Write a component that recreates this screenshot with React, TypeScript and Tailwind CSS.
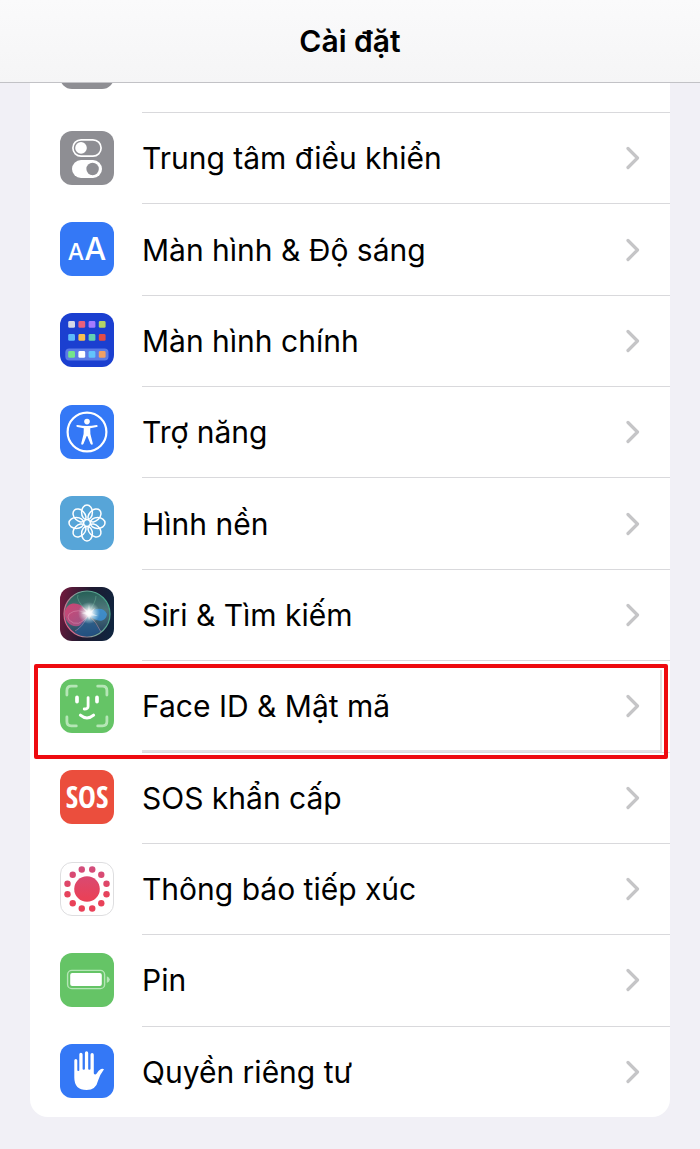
import type { ReactNode } from 'react';

const rim = [15, 45, 75, 105, 135, 165, 195, 225, 255, 285, 315, 345];
const petals = [0, 45, 90, 135, 180, 225, 270, 315];
const homeApps = [
  ['#d3d8e8', '#e8607c', '#a57bff', '#b2d465'],
  ['#5db9fa', '#f8c052', '#62d0b2', '#e24c46'],
  ['#74e58b', '#ffffff', '#63c4fb', '#f0a064'],
];
const homeRows = [8, 21, 38];

function Tile({ fill, children }: { fill: string; children?: ReactNode }) {
  return (
    <svg viewBox="0 0 54 54" className="size-[54px] shrink-0" aria-hidden="true">
      <rect width="54" height="54" rx="12" fill={fill} />
      {children}
    </svg>
  );
}

const ControlCenterIcon = () => (
  <Tile fill="#8e8e93">
    <rect x="12.9" y="8.8" width="28.2" height="16.4" rx="8.2" fill="none" stroke="#fff" strokeWidth="1.7" />
    <circle cx="21" cy="16.9" r="5.8" fill="#fff" />
    <rect x="12" y="29" width="30" height="18" rx="9" fill="#fff" />
    <circle cx="32.6" cy="38" r="6.2" fill="#8e8e93" />
  </Tile>
);

const DisplayIcon = () => (
  <Tile fill="#3478f6">
    <g fill="#fff" fontFamily="Inter, sans-serif" fontWeight="500">
      <text x="7.8" y="38" fontSize="23">A</text>
      <text x="24.2" y="38" fontSize="31">A</text>
    </g>
  </Tile>
);

const HomeScreenIcon = () => (
  <Tile fill="#1b3fd0">
    <rect x="5.3" y="35.5" width="43.2" height="12" rx="4" fill="#5b7be6" />
    {homeApps.map((row, r) =>
      row.map((color, c) => (
        <rect key={`${r}-${c}`} x={8.2 + c * 10.2} y={homeRows[r]} width="6.8" height="6.8" rx="1.4" fill={color} />
      )),
    )}
  </Tile>
);

const AccessibilityIcon = () => (
  <Tile fill="#3478f6">
    <circle cx="27" cy="27" r="19.4" fill="none" stroke="#fff" strokeWidth="2.2" />
    <circle cx="27" cy="16.6" r="2.8" fill="#fff" />
    <path
      d="M17.4 19.9 Q27 22.2 36.6 19.9 Q37.9 20 37.7 21.2 Q37.5 21.8 36.7 21.9 L30.2 23.2 L30.4 29 L32.8 38.4 Q32.8 39.9 31.3 39.6 L30.6 39 L27.3 31 H26.7 L23.4 39 L22.7 39.6 Q21.2 39.9 21.2 38.4 L23.6 29 L23.8 23.2 L17.3 21.9 Q16.4 21.8 16.3 21.1 Q16.2 20 17.4 19.9Z"
      fill="#fff"
    />
  </Tile>
);

const WallpaperIcon = () => (
  <Tile fill="#57a5d8">
    <g transform="translate(27 27)" fill="none" stroke="#fff" strokeWidth="1.5">
      {petals.map((a) => (
        <ellipse key={a} transform={`rotate(${a})`} cy="-10.6" rx="5.4" ry="7.4" />
      ))}
    </g>
  </Tile>
);

const SiriIcon = () => (
  <Tile fill="url(#siri-base)">
    <defs>
      <linearGradient id="siri-base" x1="0" y1="0.4" x2="1" y2="0.6">
        <stop offset="0" stopColor="#6b1a3c" />
        <stop offset="0.5" stopColor="#1d1a30" />
        <stop offset="1" stopColor="#10253f" />
      </linearGradient>
      <linearGradient id="siri-orb" x1="0.4" y1="0" x2="0.5" y2="1">
        <stop offset="0" stopColor="#245f55" />
        <stop offset="0.45" stopColor="#51777c" />
        <stop offset="1" stopColor="#1d3a5c" />
      </linearGradient>
      <linearGradient id="siri-rim" x1="0" y1="0.7" x2="1" y2="0.3">
        <stop offset="0" stopColor="#e55d87" />
        <stop offset="0.5" stopColor="#79a49c" />
        <stop offset="1" stopColor="#42a487" />
      </linearGradient>
      <linearGradient id="siri-left" x1="0" y1="0" x2="1" y2="1">
        <stop offset="0" stopColor="#df3f72" />
        <stop offset="1" stopColor="#a0588c" />
      </linearGradient>
      <radialGradient id="siri-glow">
        <stop offset="0" stopColor="#fff" />
        <stop offset="0.25" stopColor="#fff" stopOpacity="0.9" />
        <stop offset="1" stopColor="#c4eef0" stopOpacity="0" />
      </radialGradient>
    </defs>
    <circle cx="27" cy="27" r="23" fill="url(#siri-orb)" stroke="url(#siri-rim)" strokeWidth="1.2" />
    <path d="M30 28 C22 14 8 13 5 24 C3 38 18 44 24 35 Q26 31 30 28Z" fill="url(#siri-left)" opacity="0.9" />
    <path d="M28 27 C35 20 44 20 47 27 C46 36 36 36 28 27Z" fill="#3d91d6" opacity="0.85" />
    <path d="M29 28 C22 35 16 43 15 46 Q28 54 41 44 Q34 36 29 28Z" fill="#245d98" opacity="0.6" />
    <path d="M29 28 Q37 36 41 45 M28 28 Q23 40 15 44 M9 27 Q18 20 29 28 Q18 42 9 33 Q7 30 9 27Z" fill="none" stroke="#e3a0bd" strokeWidth="0.6" opacity="0.7" />
    <path d="M28 26 Q15 12 18 8 M28 26 Q36 15 36 9" stroke="#77bd9f" strokeWidth="0.6" fill="none" opacity="0.7" />
    <circle cx="29" cy="26" r="11" fill="url(#siri-glow)" />
    <path d="M29 17 L30 24.5 L35 21 L31.5 26 L38 29 L31 28.5 L29 33 L27.5 28 L21 26 L26.5 25 L22 20 L28 24Z" fill="#fff" opacity="0.5" />
  </Tile>
);

const FaceIdIcon = () => (
  <Tile fill="#65c466">
    <g fill="none" strokeLinecap="round" strokeLinejoin="round">
      <path
        d="M6.9 16 V11.5 Q6.9 7.2 11.2 7.2 H16.3 M37.7 7.2 H42.6 Q46.9 7.2 46.9 11.5 V16 M46.9 38 V42.6 Q46.9 46.9 42.6 46.9 H37.7 M16.3 46.9 H11.2 Q6.9 46.9 6.9 42.6 V38"
        stroke="#b5e6b6"
        strokeWidth="2.8"
      />
      <path d="M17 18.4 V22.6 M37 18.4 V22.6" stroke="#fff" strokeWidth="3.7" />
      <path d="M28.1 18.6 V27.2 Q28.1 30.2 24.2 30" stroke="#fff" strokeWidth="2.8" />
      <path d="M20.4 36.2 Q27 41.8 33.6 36.2" stroke="#fff" strokeWidth="3" />
    </g>
  </Tile>
);

const SosIcon = () => (
  <Tile fill="#eb4e3d">
    <text x="27" y="37.5" textAnchor="middle" fontSize="30" fontWeight="700" fill="#fff" fontFamily="'Liberation Sans Narrow', 'Open Sans Condensed', 'Liberation Sans', sans-serif">
      SOS
    </text>
  </Tile>
);

const ExposureIcon = () => (
  <Tile fill="#fff">
    <defs>
      <linearGradient id="exposure" gradientUnits="userSpaceOnUse" x1="27" y1="0" x2="27" y2="36">
        <stop offset="0" stopColor="#cf4f82" />
        <stop offset="1" stopColor="#e94158" />
      </linearGradient>
    </defs>
    <rect x="0.5" y="0.5" width="53" height="53" rx="11.5" fill="#fff" stroke="#dedee0" />
    <g fill="url(#exposure)">
      <circle cx="27" cy="27" r="12.8" />
      {rim.map((a) => (
        <circle key={a} cx={27 + 20.2 * Math.cos((a * Math.PI) / 180)} cy={27 + 20.2 * Math.sin((a * Math.PI) / 180)} r="3.2" />
      ))}
    </g>
  </Tile>
);

const BatteryIcon = () => (
  <Tile fill="#65c466">
    <rect x="7.6" y="17.4" width="37" height="18.2" rx="4.2" fill="none" stroke="#b5e6b6" strokeWidth="1.4" />
    <rect x="10.2" y="20" width="31.6" height="13" rx="2" fill="#fff" />
    <path d="M46.8 23.2 Q49.8 24.4 49.8 26.6 Q49.8 28.8 46.8 30Z" fill="#b5e6b6" />
  </Tile>
);

const PrivacyIcon = () => (
  <Tile fill="#3478f6">
    <path
      d="M14.3 16.4 Q14.3 14.9 15.8 14.9 Q17.3 14.9 17.3 16.4 V26.3 Q17.3 27 18.3 27 Q19.3 27 19.3 26.2 V10.5 Q19.3 8.8 20.9 8.8 Q22.6 8.8 22.6 10.5 V25 Q22.6 25.8 23.8 25.8 Q24.9 25.8 24.9 25 V9 Q24.9 7.3 26.6 7.3 Q28.2 7.3 28.2 9 V25 Q28.2 25.8 29.3 25.8 Q30.5 25.8 30.5 25 V10.8 Q30.5 9.1 32.1 9.1 Q33.8 9.1 33.8 10.8 V29.3 Q33.8 30.3 35 30.5 Q36 30.6 36.5 29.8 Q38.6 26.1 41 25.1 Q43 24.3 44 25.3 Q39.8 31 38.2 36.2 Q36 46 26.6 46 Q14.3 46 14.3 33.5Z"
      fill="#fff"
    />
  </Tile>
);

const settings: { label: string; icon: ReactNode; highlighted?: boolean }[] = [
  { label: 'Trung tâm điều khiển', icon: <ControlCenterIcon /> },
  { label: 'Màn hình & Độ sáng', icon: <DisplayIcon /> },
  { label: 'Màn hình chính', icon: <HomeScreenIcon /> },
  { label: 'Trợ năng', icon: <AccessibilityIcon /> },
  { label: 'Hình nền', icon: <WallpaperIcon /> },
  { label: 'Siri & Tìm kiếm', icon: <SiriIcon /> },
  { label: 'Face ID & Mật mã', icon: <FaceIdIcon />, highlighted: true },
  { label: 'SOS khẩn cấp', icon: <SosIcon /> },
  { label: 'Thông báo tiếp xúc', icon: <ExposureIcon /> },
  { label: 'Pin', icon: <BatteryIcon /> },
  { label: 'Quyền riêng tư', icon: <PrivacyIcon /> },
];

function Chevron() {
  return (
    <svg viewBox="0 0 14 24" className="mr-[30px] h-6 w-3.5 shrink-0" fill="none" aria-hidden="true">
      <path d="M2 2.5 L11.5 12 L2 21.5" stroke="#c5c5c7" strokeWidth="3.2" strokeLinecap="round" strokeLinejoin="round" />
    </svg>
  );
}

export default function App() {
  return (
    <div className="min-h-screen bg-[#f1f0f6] pb-8 font-['Inter','Noto_Sans',sans-serif] text-black">
      <header className="flex h-[83px] items-center justify-center border-b border-[#c2c2c6] bg-linear-to-b from-[#fafafb] to-[#f5f5f6]">
        <h1 className="text-[30px] leading-9 font-semibold">Cài đặt</h1>
      </header>
      <main className="mx-[30px] overflow-hidden rounded-b-[18px] bg-white">
        <div className="flex h-[29px] items-end overflow-hidden pb-[23px] pl-[30px]">
          <Tile fill="#8e8e93" />
        </div>
        <ul className="grid min-h-[1005px] auto-rows-fr">
          {settings.map(({ label, icon, highlighted }) => (
            <li key={label} className="relative">
              <a href="#" className="flex h-full items-center gap-7 pl-[30px]">
                {icon}
                <span className="flex flex-1 items-center justify-between self-stretch border-t border-[#d9d9dc]">
                  <span className="text-[30px] leading-9">{label}</span>
                  <Chevron />
                </span>
              </a>
              {highlighted && (
                <div className="pointer-events-none absolute top-1 right-[2px] -bottom-[7px] left-1 z-10 rounded-xs border-4 border-[#ee0a0f]">
                  <div className="mt-0.5 mr-0.5 ml-[104px] h-[82px] border-r-2 border-b-2 border-[#e3dfe1]" />
                </div>
              )}
            </li>
          ))}
        </ul>
      </main>
    </div>
  );
}
